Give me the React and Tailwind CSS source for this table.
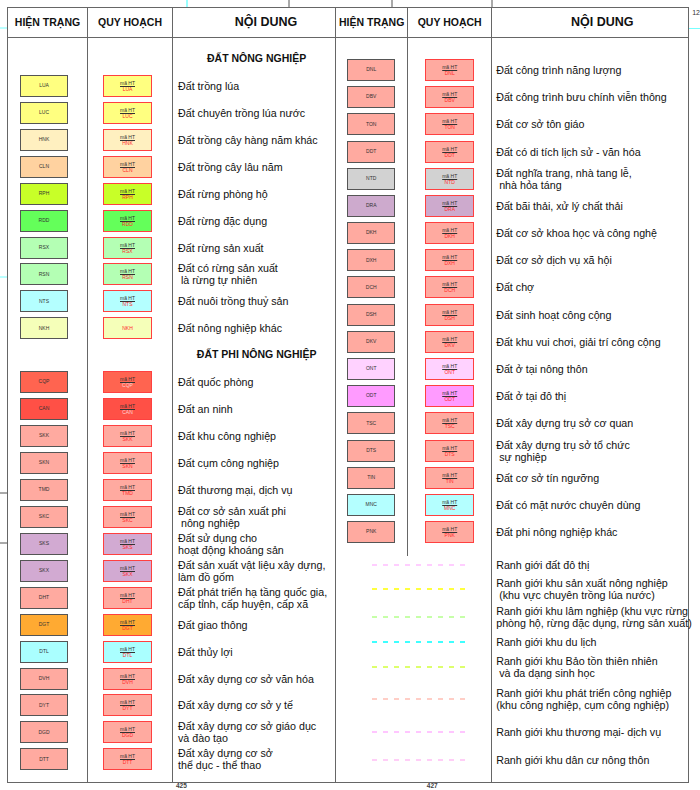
import React from "react";

const agriRows = [
  { code: "LUA", bg: "bg-[#ffff80]", text: "Đất trồng lúa" },
  { code: "LUC", bg: "bg-[#ffff80]", text: "Đất chuyên trồng lúa nước" },
  { code: "HNK", bg: "bg-[#fff0c0]", text: "Đất trồng cây hàng năm khác" },
  { code: "CLN", bg: "bg-[#ffd2a0]", text: "Đất trồng cây lâu năm" },
  { code: "RPH", bg: "bg-[#c8ff28]", text: "Đất rừng phòng hộ" },
  { code: "RDD", bg: "bg-[#64ff5a]", text: "Đất rừng đặc dụng" },
  { code: "RSX", bg: "bg-[#b4ffb4]", text: "Đất rừng sản xuất" },
  { code: "RSN", bg: "bg-[#b4ffb4]", text: "Đất có rừng sản xuất\n là rừng tự nhiên" },
  { code: "NTS", bg: "bg-[#b4ffff]", text: "Đất nuôi trồng thuỷ sản" },
  { code: "NKH", bg: "bg-[#f5ffb9]", text: "Đất nông nghiệp khác", plain: true },
];

const nonAgriRows = [
  { code: "CQP", bg: "bg-[#ff6450]", text: "Đất quốc phòng", light: true },
  { code: "CAN", bg: "bg-[#ff5046]", text: "Đất an ninh", light: true },
  { code: "SKK", bg: "bg-[#ffaaa0]", text: "Đất khu công nghiệp" },
  { code: "SKN", bg: "bg-[#ffaaa0]", text: "Đất cụm công nghiệp" },
  { code: "TMD", bg: "bg-[#ffaaa0]", text: "Đất thương mại, dịch vụ" },
  { code: "SKC", bg: "bg-[#ffaaa0]", text: "Đất cơ sở sản xuất phi\n nông nghiệp" },
  { code: "SKS", bg: "bg-[#d2aad2]", text: "Đất sử dụng cho\nhoạt động khoáng sản" },
  { code: "SKX", bg: "bg-[#d2aad2]", text: "Đất sản xuất vật liệu xây dựng,\nlàm đồ gốm" },
  { code: "DHT", bg: "bg-[#ffaaa0]", text: "Đất phát triển hạ tầng quốc gia,\ncấp tỉnh, cấp huyện, cấp xã" },
  { code: "DGT", bg: "bg-[#ffaa32]", text: "Đất giao thông" },
  { code: "DTL", bg: "bg-[#aaffff]", text: "Đất thủy lợi" },
  { code: "DVH", bg: "bg-[#ffaaa0]", text: "Đất xây dựng cơ sở văn hóa" },
  { code: "DYT", bg: "bg-[#ffaaa0]", text: "Đất xây dựng cơ sở y tế" },
  { code: "DGD", bg: "bg-[#ffaaa0]", text: "Đất xây dựng cơ sở giáo dục\nvà đào tạo" },
  { code: "DTT", bg: "bg-[#ffaaa0]", text: "Đất xây dựng cơ sở\nthể dục - thể thao" },
];

const rightRows = [
  { code: "DNL", bg: "bg-[#ffaaa0]", text: "Đất công trình năng lượng" },
  { code: "DBV", bg: "bg-[#ffaaa0]", text: "Đất công trình bưu chính viễn thông" },
  { code: "TON", bg: "bg-[#ffaaa0]", text: "Đất cơ sở tôn giáo" },
  { code: "DDT", bg: "bg-[#ffaaa0]", text: "Đất có di tích lịch sử - văn hóa" },
  { code: "NTD", bg: "bg-[#d2d2d2]", text: "Đất nghĩa trang, nhà tang lễ,\n nhà hỏa táng" },
  { code: "DRA", bg: "bg-[#cdaacd]", text: "Đất bãi thải, xử lý chất thải" },
  { code: "DKH", bg: "bg-[#ffaaa0]", text: "Đất cơ sở khoa học và công nghệ" },
  { code: "DXH", bg: "bg-[#ffaaa0]", text: "Đất cơ sở dịch vụ xã hội" },
  { code: "DCH", bg: "bg-[#ffaaa0]", text: "Đất chợ" },
  { code: "DSH", bg: "bg-[#ffaaa0]", text: "Đất sinh hoạt công cộng" },
  { code: "DKV", bg: "bg-[#ffaaa0]", text: "Đất khu vui chơi, giải trí công cộng" },
  { code: "ONT", bg: "bg-[#ffd2ff]", text: "Đất ở tại nông thôn" },
  { code: "ODT", bg: "bg-[#ff9bff]", text: "Đất ở tại đô thị" },
  { code: "TSC", bg: "bg-[#ffaaa0]", text: "Đất xây dựng trụ sở cơ quan" },
  { code: "DTS", bg: "bg-[#ffaaa0]", text: "Đất xây dựng trụ sở tổ chức\n sự nghiệp" },
  { code: "TIN", bg: "bg-[#ffaaa0]", text: "Đất cơ sở tín ngưỡng" },
  { code: "MNC", bg: "bg-[#b4ffff]", text: "Đất có mặt nước chuyên dùng" },
  { code: "PNK", bg: "bg-[#ffaaa0]", text: "Đất phi nông nghiệp khác" },
];

const boundaries = [
  { color: "#ffbfff", h: "h-[18px]", text: "Ranh giới đất đô thị" },
  { color: "#ffff00", h: "h-[30px]", text: "Ranh giới khu sản xuất nông nghiệp\n (khu vực chuyên trồng lúa nước)" },
  { color: "#b4ff8c", h: "h-[26px]", text: "Ranh giới khu lâm nghiệp (khu vực rừng\nphòng hộ, rừng đặc dụng, rừng sản xuất)" },
  { color: "#00ffff", h: "h-[24px]", text: "Ranh giới khu du lịch" },
  { color: "#d2ff3c", h: "h-[26px]", text: "Ranh giới khu Bảo tồn thiên nhiên\n và đa dạng sinh học" },
  { color: "#ffbeb4", h: "h-[38px]", text: "Ranh giới khu phát triển công nghiệp\n(khu công nghiệp, cụm công nghiệp)" },
  { color: "#ffb4ff", h: "h-[28px]", text: "Ranh giới khu thương mại- dịch vụ" },
  { color: "#ffbef5", h: "h-[28px]", text: "Ranh giới khu dân cư nông thôn" },
];

function CurBox({ code, bg }) {
  return (
    <div className={`w-[48px] h-[22px] border-[1.5px] border-[#555] ${bg} flex items-center justify-center text-[5px] text-[#333]`}>
      {code}
    </div>
  );
}

function PlanBox({ code, bg, plain, light }) {
  return (
    <div className={`w-[49px] h-[22px] border border-[#ff4040] ${bg} flex flex-col items-center justify-center text-[5px] leading-[6px]`}>
      {!plain && <span className="underline text-[#333]">mã HT</span>}
      <span className={light ? "text-[#ffd2d2]" : "text-[#ff2a2a]"}>{code}</span>
    </div>
  );
}

function Label({ text }) {
  return <div className="whitespace-pre text-[10.7px] leading-[12px] text-[#111]">{text}</div>;
}

function Header({ narrow }) {
  return (
    <div className={`grid ${narrow ? "grid-cols-[80px_85px_1fr]" : "grid-cols-[72px_84px_1fr]"} h-[30px] border-b border-[#666] font-bold text-[#111]`}>
      <div className="flex items-center justify-center border-r border-[#666] text-[10.5px]">HIỆN TRẠNG</div>
      <div className="flex items-center justify-center border-r border-[#666] text-[10.5px]">QUY HOẠCH</div>
      <div className="flex items-center justify-center pl-[24px] text-[12.5px]">NỘI DUNG</div>
    </div>
  );
}

function LeftTable() {
  const Heading = ({ children }) => (
    <div className="h-[26.95px] flex items-center justify-center font-bold text-[10.5px] text-[#111]">{children}</div>
  );
  const Gap = () => <div className="h-[26.95px]" />;
  return (
    <div className="w-[330px] h-[776px] border border-[#666] flex flex-col">
      <Header narrow />
      <div className="grid grid-cols-[80px_85px_1fr] flex-1">
        <div className="border-r border-[#666] pt-[7.5px] pl-[12px]">
          <Gap />
          {agriRows.map((r) => (
            <div key={r.code} className="h-[26.95px] flex items-center"><CurBox {...r} /></div>
          ))}
          <Gap />
          {nonAgriRows.map((r) => (
            <div key={r.code} className="h-[26.95px] flex items-center"><CurBox {...r} /></div>
          ))}
        </div>
        <div className="border-r border-[#666] pt-[7.5px] pl-[15px]">
          <Gap />
          {agriRows.map((r) => (
            <div key={r.code} className="h-[26.95px] flex items-center"><PlanBox {...r} /></div>
          ))}
          <Gap />
          {nonAgriRows.map((r) => (
            <div key={r.code} className="h-[26.95px] flex items-center"><PlanBox {...r} /></div>
          ))}
        </div>
        <div className="pt-[7.5px] pl-[5px]">
          <Heading>ĐẤT NÔNG NGHIỆP</Heading>
          {agriRows.map((r) => (
            <div key={r.code} className="h-[26.95px] flex items-center"><Label text={r.text} /></div>
          ))}
          <Heading>ĐẤT PHI NÔNG NGHIỆP</Heading>
          {nonAgriRows.map((r) => (
            <div key={r.code} className="h-[26.95px] flex items-center"><Label text={r.text} /></div>
          ))}
        </div>
      </div>
    </div>
  );
}

function DashLine({ color }) {
  return (
    <svg width="94" height="4" viewBox="0 0 94 4">
      <line x1="0" y1="2" x2="94" y2="2" stroke={color} strokeWidth="1.6" strokeDasharray="5 6" />
    </svg>
  );
}

function RightTable() {
  return (
    <div className="w-[353px] h-[776px] border border-l-0 border-[#666] flex flex-col">
      <Header />
      <div className="grid grid-cols-[72px_84px_1fr] h-[518px]">
        <div className="border-r border-[#666] pt-[18.4px] pl-[11px]">
          {rightRows.map((r) => (
            <div key={r.code} className="h-[27.2px] flex items-center"><CurBox {...r} /></div>
          ))}
        </div>
        <div className="border-r border-[#666] pt-[18.4px] pl-[17px]">
          {rightRows.map((r) => (
            <div key={r.code} className="h-[27.2px] flex items-center"><PlanBox {...r} /></div>
          ))}
        </div>
        <div className="pt-[18.4px] pl-[4px]">
          {rightRows.map((r) => (
            <div key={r.code} className="h-[27.2px] flex items-center"><Label text={r.text} /></div>
          ))}
        </div>
      </div>
      <div className="grid grid-cols-[156px_1fr] flex-1">
        <div className="border-r border-[#666] pl-[36px]">
          {boundaries.map((b) => (
            <div key={b.text} className={`${b.h} flex items-center`}><DashLine color={b.color} /></div>
          ))}
        </div>
        <div className="pl-[4px]">
          {boundaries.map((b) => (
            <div key={b.text} className={`${b.h} flex items-center`}><Label text={b.text} /></div>
          ))}
        </div>
      </div>
    </div>
  );
}

export default function App() {
  return (
    <div className="w-[700px] h-[790px] bg-white overflow-hidden font-['Liberation_Sans',Arial,sans-serif]">
      {/* scan marks above the tables */}
      <svg width="700" height="7" className="block">
        <line x1="187" y1="0" x2="187" y2="7" stroke="#7ff" strokeWidth="1.5" />
        <line x1="289" y1="0" x2="289" y2="7" stroke="#555" strokeWidth="1" />
        <line x1="392" y1="0" x2="392" y2="7" stroke="#555" strokeWidth="1" />
        <line x1="492" y1="0" x2="492" y2="7" stroke="#555" strokeWidth="1" />
      </svg>
      <div className="flex">
        <svg width="7" height="776" className="block shrink-0">
          <line x1="0" y1="21" x2="7" y2="21" stroke="#7ff" strokeWidth="1" />
          <line x1="0" y1="270" x2="7" y2="270" stroke="#7ff" strokeWidth="1" />
          <line x1="0" y1="486" x2="7" y2="486" stroke="#555" strokeWidth="1" />
          <line x1="0" y1="536" x2="7" y2="536" stroke="#555" strokeWidth="1" />
        </svg>
        <LeftTable />
        <RightTable />
        <div className="flex-1 flex flex-col">
          <div className="pl-[3px] pt-[1px] text-[7px] text-[#333] leading-[10px]">12</div>
          <div className="mt-[10px] h-px bg-[#7ff]" />
        </div>
      </div>
      <div className="flex h-[7px] items-center text-[6.5px] font-bold text-[#444] leading-none">
        <span className="ml-[176px]">425</span>
        <span className="ml-[240px]">427</span>
      </div>
    </div>
  );
}
